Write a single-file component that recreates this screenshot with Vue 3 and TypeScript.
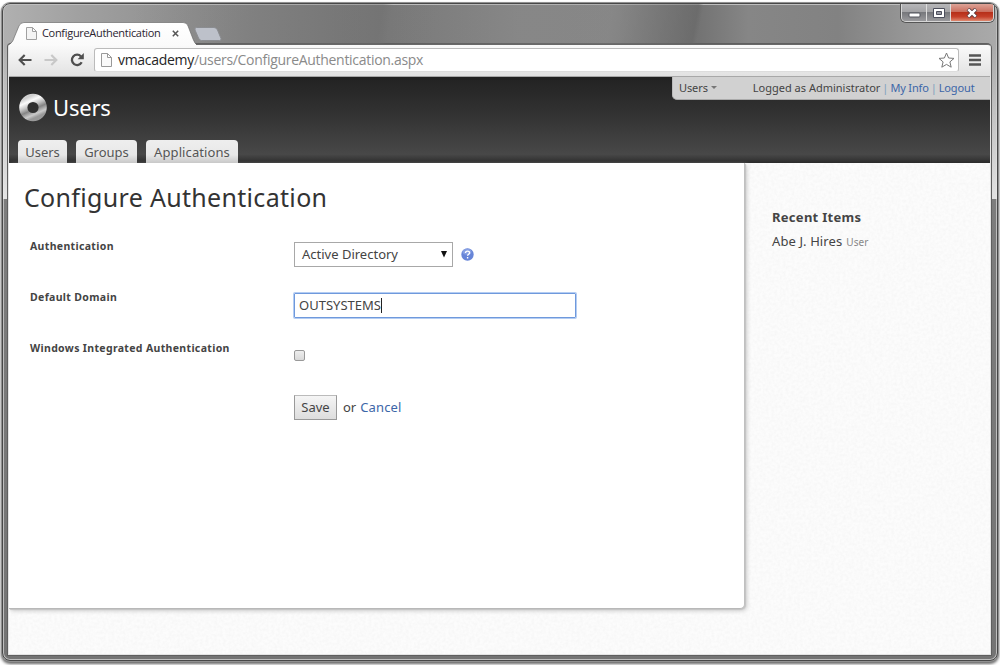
<script setup lang="ts">
import { ref } from 'vue'

interface Field { label: string; kind: 'select' | 'text' | 'check' }

const tabs: string[] = ['Users', 'Groups', 'Applications']
const fields: Field[] = [
  { label: 'Authentication', kind: 'select' },
  { label: 'Default Domain', kind: 'text' },
  { label: 'Windows Integrated Authentication', kind: 'check' },
]
const domain = ref('OUTSYSTEMS')
const integrated = ref(false)
</script>

<template>
  <div class="desktop">
    <div class="window">
      <div class="titlebar">
        <div class="tab">
          <svg class="tab-shape" width="187" height="24" viewBox="0 0 188 24" preserveAspectRatio="none">
            <defs>
              <linearGradient id="tabFill" x1="0" y1="0" x2="0" y2="1">
                <stop offset="0" stop-color="#fff" /><stop offset="1" stop-color="#fafafa" />
              </linearGradient>
            </defs>
            <path d="M0 24V23C3 21 4 19 5 16L10 4Q11.500 .5 15 .5H175Q179 .5 180 4L185 17Q187 22 188 22V24Z" fill="url(#tabFill)" />
            <path d="M0 22C3 21 4 19 5 16L10 4Q11.500 .5 15 .5H175Q179 .5 180 4L185 17Q187 21.500 188 22" fill="none" stroke="#666" stroke-opacity=".65" />
          </svg>
          <svg class="page-icon" width="11" height="13" viewBox="0 0 11 13"><path d="M.5.5h6l4 4v8H.5zM6.500.5v4h4" fill="#f4f4f4" stroke="#a0a0a0" /></svg>
          <span class="tab-title">ConfigureAuthentication</span>
          <svg class="tab-close" width="7" height="7" viewBox="0 0 7 7"><path d="M.8.8l5.400 5.400M6.200.8L.8 6.200" stroke="#555" stroke-width="1.500" /></svg>
        </div>
        <svg class="new-tab" width="28" height="14" viewBox="0 0 28 14"><path d="M2.500.5H20Q22.500.5 23.500 3L27 11.500Q27.500 13.500 25.500 13.500H7.500Q5.500 13.500 4.500 11L1 3Q.3.500 2.500.5z" fill="#bdc1ca" stroke="#8b8d91" /></svg>
        <div class="controls">
          <div class="ctl min">
            <svg width="13" height="6" viewBox="0 0 13 6"><rect x="1" y="1" width="11" height="4" rx="1" fill="#fff" stroke="#55565f" /></svg>
          </div>
          <div class="ctl max">
            <svg width="12" height="10" viewBox="0 0 12 10"><path d="M.5.5h11v9H.5z" fill="#fff" stroke="#4d4f5c" /><path d="M3.500 3.500h5v3h-5z" fill="#989aa4" stroke="#4d4f5c" /></svg>
          </div>
          <div class="ctl close">
            <svg width="12" height="10" viewBox="0 0 12 10"><path d="M2 1l8 8M10 1L2 9" stroke="#573a3e" stroke-width="4" /><path d="M2.300 1.300l7.400 7.400M9.700 1.300L2.300 8.700" stroke="#fff" stroke-width="2.400" /></svg>
          </div>
        </div>
      </div>

      <div class="frame">
        <div class="client">
          <div class="toolbar">
            <svg class="back" width="14" height="12" viewBox="0 0 14 12"><path d="M13.500 6H2M6.700 1L1.700 6l5 5" fill="none" stroke="#4f4f4f" stroke-width="2.200" /></svg>
            <svg class="forward" width="14" height="12" viewBox="0 0 14 12"><path d="M.5 6H12M7.300 1l5 5-5 5" fill="none" stroke="#c8c8c8" stroke-width="2.200" /></svg>
            <svg class="reload" width="15" height="14" viewBox="0 0 15 14"><path d="M11.700 9.300A5.200 5.200 0 1 1 11 3.400" fill="none" stroke="#4f4f4f" stroke-width="2.300" /><path d="M13.800 0v6.200H7.600z" fill="#4f4f4f" /></svg>
            <div class="address">
              <svg class="url-icon" width="11" height="14" viewBox="0 0 11 14"><path d="M.5.5h6l4 4v9H.5zM6.500.5v4h4" fill="#fafafa" stroke="#999" /></svg>
              <span class="url"><b>vmacademy</b>/users/ConfigureAuthentication.aspx</span>
              <svg class="star" width="17" height="17" viewBox="0 0 17 17"><path d="M8.500 1l2.100 5 5.400.4-4.100 3.500 1.300 5.300-4.700-2.800-4.700 2.800 1.300-5.300L1 6.400 6.400 6z" fill="#fff" stroke="#777" stroke-linejoin="round" /></svg>
            </div>
            <svg class="menu" width="12" height="12" viewBox="0 0 12 12"><path d="M0 1.500h12M0 6h12M0 10.500h12" stroke="#555" stroke-width="2.400" /></svg>
          </div>

          <header class="header">
            <div class="brand">
              <svg width="28" height="29" viewBox="0 0 28 29">
                <defs>
                  <linearGradient id="ring" x1=".2" y1="0" x2=".65" y2="1">
                    <stop offset="0" stop-color="#d0d0d0" /><stop offset=".2" stop-color="#fbfbfb" />
                    <stop offset=".42" stop-color="#c4c4c4" /><stop offset=".62" stop-color="#858585" />
                    <stop offset=".85" stop-color="#cacaca" /><stop offset="1" stop-color="#999" />
                  </linearGradient>
                </defs>
                <circle cx="14" cy="14.500" r="9.700" fill="none" stroke="url(#ring)" stroke-width="8.200" />
              </svg>
              <span class="brand-name">Users</span>
            </div>
            <nav class="nav">
              <a v-for="tab in tabs" :key="tab" :class="['nav-tab', tab.toLowerCase()]"><span>{{ tab }}</span></a>
            </nav>
            <div class="account">
              <span class="acc-users">Users</span><i class="caret"></i>
              <span class="acc-info">Logged as Administrator</span><i class="bar">|</i><a>My Info</a><i class="bar">|</i><a>Logout</a>
            </div>
          </header>

          <div class="page">
            <svg class="texture" width="982" height="492">
              <filter id="grain" x="0" y="0" width="100%" height="100%">
                <feTurbulence type="fractalNoise" baseFrequency=".35" numOctaves="2" seed="4" />
                <feColorMatrix values="0 0 0 0 .5  0 0 0 0 .5  0 0 0 0 .5  .16 0 0 0 -.05" />
              </filter>
              <rect width="982" height="492" filter="url(#grain)" />
            </svg>
            <main class="main">
              <h1>Configure Authentication</h1>
              <form @submit.prevent>
                <div v-for="field in fields" :key="field.label" class="row">
                  <label>{{ field.label }}</label>
                  <div v-if="field.kind === 'select'" class="value">
                    <div class="select"><span>Active Directory</span><svg width="6" height="7" viewBox="0 0 6 7"><path d="M0 0h6L3 6.500z" fill="#111" /></svg></div>
                    <svg class="help" width="13" height="13" viewBox="0 0 13 13">
                      <circle cx="6.500" cy="6.500" r="6.200" fill="#6785d8" />
                      <ellipse cx="6" cy="3.800" rx="4.500" ry="3" fill="#a1b4ed" opacity=".55" />
                      <path d="M4.500 5.100C4.500 2.500 8.600 2.500 8.600 4.900 8.600 6.300 6.600 6.300 6.600 7.800M6.600 8.900v1.500" fill="none" stroke="#fff" stroke-width="1.400" />
                    </svg>
                  </div>
                  <div v-else-if="field.kind === 'text'" class="value">
                    <div class="input"><span>{{ domain }}</span><i class="cursor"></i></div>
                  </div>
                  <div v-else class="value check">
                    <span class="checkbox" role="checkbox" :aria-checked="integrated" @click="integrated = !integrated"></span>
                  </div>
                </div>
                <div class="row actions">
                  <label></label>
                  <div class="value"><button type="button"><span>Save</span></button><span class="or">or</span><a class="cancel">Cancel</a></div>
                </div>
              </form>
            </main>
            <aside class="side">
              <h2>Recent Items</h2>
              <p><span class="person">Abe J. Hires</span><small>User</small></p>
            </aside>
          </div>
        </div>
      </div>
    </div>
  </div>
</template>

<style>
body { margin: 0; background: #fff; overflow: hidden; }
</style>

<style scoped>
* { box-sizing: border-box; }
.desktop { width: 1000px; height: 665px; padding: 3px 2px 3px; overflow: hidden; font-family: "Noto Sans", "Open Sans", sans-serif; color: #444; }
.window {
  width: 996px; height: 658px; border: 1px solid #484848; border-radius: 8px; overflow: hidden;
  background:
    linear-gradient(#7d7d7d, #747474) 0 195px / 100% 470px no-repeat,
    linear-gradient(to right, #b0b0b0, #a0a0a0 8%, #848484 25%, #777 38%, #868686 52%, #858585 62%, #737373 70%, #868686 75%, #828282 84%, #999 92%, #aaa);
  box-shadow: inset 0 0 0 1px #bebebe, 0 0 0 1px #909090, 0 2px 3px 1px #666;
}
.titlebar { height: 40px; display: flex; align-items: flex-end; position: relative; z-index: 1;
  background: linear-gradient(100deg, transparent 13%, #70707066 38%, transparent 39%, #8a8a8a55 61%, #65656588 69.500%, transparent 70%); }
.tab { position: relative; width: 187px; height: 24px; margin: 0 0 -2px 6px; padding-bottom: 2px; display: flex; align-items: center; }
.tab-shape { position: absolute; inset: 0; }
.page-icon { position: relative; margin-left: 17px; }
.tab-title { position: relative; margin-left: 5px; width: 121px; font: 11px/16px "Open Sans", "Noto Sans", sans-serif; color: #2b2430; white-space: nowrap; letter-spacing: -.31px; }
.tab-close { position: relative; margin-left: 9px; }
.new-tab { margin: 0 0 3px -2px; }
.controls { position: absolute; top: 0; right: 3px; width: 93px; height: 18px; display: flex; border: 1px solid #d6d6d6; border-top: 0; border-radius: 0 0 5px 5px; overflow: hidden; box-shadow: 0 0 0 1px #555; }
.ctl { display: flex; align-items: center; justify-content: center; background: linear-gradient(#b7b7b9, #a2a2a5 48%, #77787c 50%, #9a9a9d); border-right: 1px solid #ddd; }
.min { width: 25px; padding-top: 5px; }
.max { width: 24px; }
.close { flex: 1; border: 0; background: linear-gradient(#dda397, #ca6e5e 46%, #b7301a 50%, #c5402a 75%, #df8a71); }

.frame { padding: 0 5px 0 5px; background: linear-gradient(#fff0, #ffffffa8) 0 0 / 100% 155px no-repeat; }
.client { width: 983px; height: 611px; border: 1px solid #e4e4e4; border-top-color: #686868; border-radius: 3px 4px 0 0; background: #fafafa; overflow: hidden; box-shadow: 0 0 0 1px #5f5f5f; }
.toolbar { height: 32px; display: flex; align-items: center; background: linear-gradient(#fafafa, #e2e2e2); border-bottom: 1px solid #a8a8a8; padding-bottom: 1px; }
.back { margin-left: 9px; }
.forward { margin-left: 12px; }
.reload { margin-left: 12px; }
.address { margin-left: 9px; width: 865px; height: 24px; display: flex; align-items: center; background: #fff; border: 1px solid #bbb; border-bottom-color: #ddd; border-radius: 3px; }
.url-icon { margin-left: 6px; }
.url { flex: 1; margin-left: 6px; font: 14px/20px "Open Sans", sans-serif; color: #8a8a8a; white-space: nowrap; letter-spacing: -.3px; }
.url b { font-weight: 400; color: #252525; }
.star { margin-right: 3px; }
.menu { margin-left: 10px; }

.header { position: relative; height: 86px; background: linear-gradient(#222, #333 45%, #484848 90%, #2b2b2b); }
.brand { height: 63px; display: flex; align-items: center; padding: 0 0 2px 10px; }
.brand-name { margin: -2px 0 0 6px; font-size: 22px; line-height: 28px; color: #fff; letter-spacing: -.2px; }
.nav { display: flex; padding-left: 9px; gap: 9px; }
.nav-tab { height: 23px; display: flex; justify-content: center; align-items: center; font-size: 13px; color: #555; background: linear-gradient(#eee, #e8e8e8 65%, #c8c8c8); border-radius: 4px 4px 0 0; white-space: nowrap; }
.nav-tab.users { width: 49px; }
.nav-tab.groups { width: 61px; }
.nav-tab.applications { width: 92px; letter-spacing: .1px; }
.account { position: absolute; right: 0; top: 0; width: 318px; height: 23px; display: flex; align-items: center; padding: 0 0 1px 6px; background: #d1d1d1; border-bottom: 1px solid #aaa; border-left: 1px solid #bbb; border-radius: 0 0 0 5px; font-size: 11px; white-space: nowrap; color: #444; }
.acc-users { letter-spacing: -.1px; }
.caret { border: 3px solid transparent; border-top-color: #777; border-bottom: 0; margin-left: 3px; }
.acc-info { margin-left: 36px; }
.bar { font-style: normal; color: #7e9fbd; width: 10px; text-align: center; }
a { color: #3c66a8; text-decoration: none; }
.account a { letter-spacing: -.15px; }
.nav-tab { color: #555; }

.page { position: relative; height: 492px; display: flex; background: #fcfcfc; }
.texture { position: absolute; inset: 0; }
.main { position: relative; width: 736px; height: 446px; background: #fff; border-right: 1px solid #c0c0c0; border-bottom: 1px solid #b8b8b8; border-radius: 0 0 5px 0; box-shadow: 1px 1px 1px #c4c4c4, 2px 2px 4px #ccc; padding-left: 15px; }
h1 { margin: 0; padding-top: 17px; height: 69px; font-size: 25px; line-height: 34px; font-weight: 400; color: #333; letter-spacing: .32px; white-space: nowrap; }
.row { display: flex; height: 51px; padding-left: 6px; }
.row label { width: 264px; padding-top: 6px; font-size: 10.500px; line-height: 16px; font-weight: 700; letter-spacing: .34px; color: #444; white-space: nowrap; }
.value { display: flex; align-items: center; height: 26px; margin-top: 9px; font-size: 13px; white-space: nowrap; }
.check { padding-bottom: 1px; }
.select { width: 159px; height: 25px; display: flex; align-items: center; justify-content: space-between; padding: 0 5px 0 7px; border: 1px solid #a8a8a8; background: #fff; }
.help { margin-left: 8px; }
.input { width: 282px; height: 25px; display: flex; align-items: center; border: 1px solid #6f99dc; box-shadow: 0 0 0 1px #b4cdf3; padding-left: 4px; border-radius: 1px; }
.cursor { width: 1px; height: 15px; background: #222; }
.checkbox { width: 11px; height: 11px; border: 1px solid #999; border-radius: 2px; background: linear-gradient(#eee, #d9d9d9); }
button { width: 43px; height: 25px; padding: 0; border: 1px solid #999; border-top-color: #bbb; background: linear-gradient(#f5f5f5, #ddd); font: inherit; color: #444; }
.or { margin: 0 4px 0 6px; }
.cancel { letter-spacing: .15px; }
.side { position: relative; padding-left: 27px; }
h2 { margin: 45px 0 0; font-size: 13px; line-height: 18px; font-weight: 700; letter-spacing: .28px; }
.side p { margin: 6px 0 0; font-size: 13px; line-height: 18px; white-space: nowrap; letter-spacing: .1px; }
small { margin-left: 4px; font-size: 10px; color: #888; }
</style>
